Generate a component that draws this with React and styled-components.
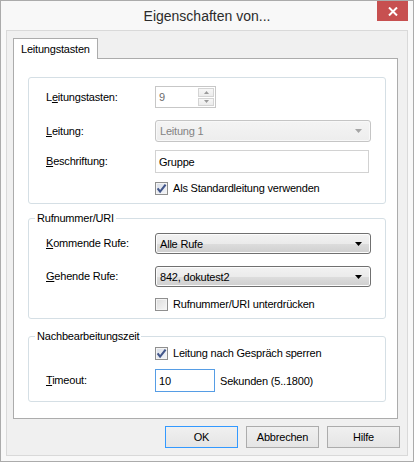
import styled, { createGlobalStyle } from "styled-components";

const GlobalStyle = createGlobalStyle`
  html, body {
    margin: 0;
    padding: 0;
    background: #fff;
  }
  body {
    font-family: "Liberation Sans", Arial, sans-serif;
    font-size: 11px;
    letter-spacing: -0.2px;
    color: #000;
  }
`;

const Arrow = ({ dir = "down", color = "#000", w = 7, h = 4 }) => (
  <svg width={w} height={h} viewBox={`0 0 ${w} ${h}`}>
    {dir === "down" ? (
      <polygon points={`0,0 ${w},0 ${w / 2},${h}`} fill={color} />
    ) : (
      <polygon points={`0,${h} ${w},${h} ${w / 2},0`} fill={color} />
    )}
  </svg>
);

const CheckBox = ({ checked, children }) => (
  <CheckLabel>
    <Box $checked={checked}>
      {checked && (
        <svg width="11" height="11" viewBox="0 0 11 11">
          <path
            d="M1.6 5.4 L4.1 8.6 L9.6 1.6"
            fill="none"
            stroke="#42568a"
            strokeWidth="2.1"
          />
        </svg>
      )}
    </Box>
    {children}
  </CheckLabel>
);

const ComboBox = ({ value, disabled, width = 216 }) => (
  <Combo $disabled={disabled} $width={width}>
    <span>{value}</span>
    <Arrow color={disabled ? "#a5a5a5" : "#000"} />
  </Combo>
);

export default function App() {
  return (
    <>
      <GlobalStyle />
      <Window>
        <TitleBar>
          <span />
          <Title>Eigenschaften von...</Title>
          <CloseButton>
            <svg width="10" height="9" viewBox="0 0 10 9">
              <path d="M1 0.5 L9 8.5 M9 0.5 L1 8.5" stroke="#fff" strokeWidth="2" />
            </svg>
          </CloseButton>
        </TitleBar>

        <Client>
          <TabStrip>
            <Tab>Leitungstasten</Tab>
          </TabStrip>

          <TabPage>
            <Group>
              <GroupBody $pad="8px 0 8px 17px">
                <Row>
                  <Label>
                    L<u>e</u>itungstasten:
                  </Label>
                  <Spin>
                    <span>9</span>
                    <SpinButtons>
                      <SpinButton>
                        <Arrow dir="up" color="#9a9a9a" w={5} h={3} />
                      </SpinButton>
                      <SpinButton>
                        <Arrow color="#9a9a9a" w={5} h={3} />
                      </SpinButton>
                    </SpinButtons>
                  </Spin>
                </Row>
                <Row $mt={12}>
                  <Label>
                    <u>L</u>eitung:
                  </Label>
                  <ComboBox value="Leitung 1" disabled />
                </Row>
                <Row $mt={8}>
                  <Label>
                    <u>B</u>eschriftung:
                  </Label>
                  <TextBox $width={214}>Gruppe</TextBox>
                </Row>
                <Row $mt={9}>
                  <span />
                  <CheckBox checked>Als Standardleitung verwenden</CheckBox>
                </Row>
              </GroupBody>
            </Group>

            <Group $mt={7}>
              <Legend>Rufnummer/URI</Legend>
              <GroupBody $pad="8px 0 7px 17px">
                <Row>
                  <Label>
                    <u>K</u>ommende Rufe:
                  </Label>
                  <ComboBox value="Alle Rufe" />
                </Row>
                <Row $mt={12}>
                  <Label>
                    <u>G</u>ehende Rufe:
                  </Label>
                  <ComboBox value="842, dokutest2" />
                </Row>
                <Row $mt={11}>
                  <span />
                  <CheckBox>Rufnummer/URI unterdrücken</CheckBox>
                </Row>
              </GroupBody>
            </Group>

            <Group $mt={10}>
              <Legend>Nachbearbeitungszeit</Legend>
              <GroupBody $pad="4px 0 9px 17px">
                <Row>
                  <span />
                  <CheckBox checked>Leitung nach Gespräch sperren</CheckBox>
                </Row>
                <Row $mt={9}>
                  <Label>
                    <u>T</u>imeout:
                  </Label>
                  <Inline>
                    <TextBox $width={60} $focused>
                      10
                    </TextBox>
                    <span>Sekunden (5..1800)</span>
                  </Inline>
                </Row>
              </GroupBody>
            </Group>
          </TabPage>

          <ButtonBar>
            <Button $default>OK</Button>
            <Button>Abbrechen</Button>
            <Button>Hilfe</Button>
          </ButtonBar>
        </Client>
      </Window>
    </>
  );
}

const Window = styled.div`
  width: 414px;
  height: 462px;
  box-sizing: border-box;
  border: 1px solid #ababab;
  background: #f8f8f8;
  display: flex;
  flex-direction: column;
`;

const TitleBar = styled.div`
  height: 29px;
  display: grid;
  grid-template-columns: 1fr auto 1fr;
  align-items: center;
`;

const Title = styled.div`
  font-size: 14px;
  letter-spacing: 0;
  color: #2b2b2b;
  padding-top: 1px;
`;

const CloseButton = styled.div`
  justify-self: end;
  align-self: start;
  width: 31px;
  height: 20px;
  margin-right: 5px;
  background: #c75050;
  display: flex;
  align-items: center;
  justify-content: center;
`;

const Client = styled.div`
  flex: 1;
  margin: 0 5px 5px;
  border: 1px solid #d9d9d9;
  background: #f0f0f0;
  padding: 7px 8px 7px 6px;
  display: flex;
  flex-direction: column;
`;

const TabStrip = styled.div`
  display: flex;
  position: relative;
  z-index: 1;
`;

const Tab = styled.div`
  width: 85px;
  height: 21px;
  box-sizing: border-box;
  margin-bottom: -1px;
  padding: 4px 0 0 7px;
  border: 1px solid #acacac;
  border-bottom: none;
  background: #fff;
`;

const TabPage = styled.div`
  flex: 1;
  margin-right: 1px;
  border: 1px solid #acacac;
  background: #fff;
  padding: 18px 11px 0 14px;
`;

const Group = styled.fieldset`
  margin: ${({ $mt }) => $mt || 0}px 0 0;
  padding: 0;
  min-inline-size: 0;
  border: 1px solid #d5dfe5;
  border-radius: 3px;
`;

const Legend = styled.legend`
  margin-left: 6px;
  padding: 0 2px;
  line-height: 14px;
`;

const GroupBody = styled.div`
  padding: ${({ $pad }) => $pad};
`;

const Row = styled.div`
  display: grid;
  grid-template-columns: 109px auto;
  align-items: center;
  margin-top: ${({ $mt }) => $mt || 0}px;
`;

const Label = styled.span`
  line-height: 13px;
  white-space: nowrap;
`;

const Inline = styled.div`
  display: flex;
  align-items: center;
  gap: 5px;
`;

const Spin = styled.div`
  width: 61px;
  height: 22px;
  box-sizing: border-box;
  border: 1px solid #c7c7c7;
  background: #fff;
  color: #6d6d6d;
  display: flex;
  align-items: center;
  justify-content: space-between;
  padding: 1px 1px 1px 3px;
`;

const SpinButtons = styled.div`
  align-self: stretch;
  display: flex;
  flex-direction: column;
  gap: 1px;
`;

const SpinButton = styled.span`
  flex: 1;
  width: 16px;
  box-sizing: border-box;
  border: 1px solid #d4d4d4;
  background: linear-gradient(#f7f7f7, #ececec);
  display: flex;
  align-items: center;
  justify-content: center;
`;

const Combo = styled.div`
  width: ${({ $width }) => $width}px;
  height: ${({ $disabled }) => ($disabled ? 22 : 21)}px;
  box-sizing: border-box;
  border: 1px solid ${({ $disabled }) => ($disabled ? "#c5c5c5" : "#707070")};
  border-radius: 3px;
  background: ${({ $disabled }) =>
    $disabled
      ? "linear-gradient(#f4f4f4, #ededed)"
      : "linear-gradient(#f2f2f2 0%, #ebebeb 50%, #dddddd 51%, #cfcfcf 100%)"};
  box-shadow: inset 0 0 0 1px ${({ $disabled }) => ($disabled ? "#f8f8f8" : "#fcfcfc")};
  color: ${({ $disabled }) => ($disabled ? "#838383" : "#000")};
  display: flex;
  align-items: center;
  justify-content: space-between;
  padding: 0 8px 0 4px;
`;

const TextBox = styled.div`
  width: ${({ $width }) => $width}px;
  height: 23px;
  box-sizing: border-box;
  border: 1px solid ${({ $focused }) => ($focused ? "#569de5" : "#d2d2d2")};
  background: #fff;
  display: flex;
  align-items: center;
  padding-left: 3px;
`;

const CheckLabel = styled.label`
  display: flex;
  align-items: center;
  gap: 5px;
  line-height: 13px;
  white-space: nowrap;
`;

const Box = styled.span`
  width: 13px;
  height: 13px;
  box-sizing: border-box;
  border: 1px solid #8f8f8f;
  background: ${({ $checked }) =>
    $checked
      ? "linear-gradient(135deg, #d9dee8, #f3f5f9)"
      : "linear-gradient(135deg, #dcdcdc, #f7f7f7)"};
  box-shadow: inset 0 0 0 1px #f4f4f4;
  display: flex;
  align-items: center;
  justify-content: center;
`;

const ButtonBar = styled.div`
  display: flex;
  justify-content: flex-end;
  gap: 8px;
  margin: 7px -1px 0 0;
`;

const Button = styled.div`
  width: 73px;
  height: 22px;
  box-sizing: border-box;
  border: 1px solid ${({ $default }) => ($default ? "#3399ff" : "#acacac")};
  background: linear-gradient(#f0f0f0, #e5e5e5);
  display: flex;
  align-items: center;
  justify-content: center;
`;
